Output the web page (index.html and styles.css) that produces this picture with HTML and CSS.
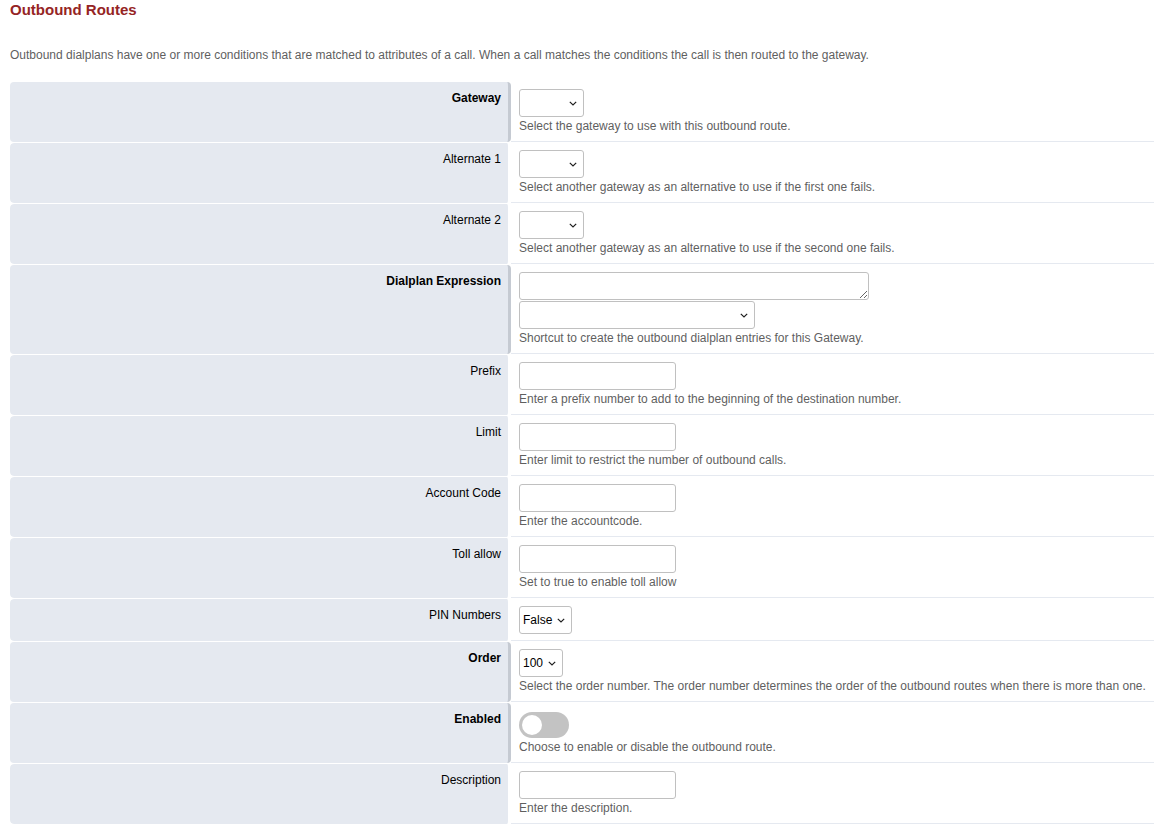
FILE: index.html
```html
<!DOCTYPE html>
<html lang="en">
<head>
    <meta charset="UTF-8">
    <meta name="viewport" content="width=device-width, initial-scale=1.0">
    <title>Outbound Routes</title>
    <link rel="stylesheet" href="styles.css">
</head>
<body>
    <div class="page">
        <h1 class="title">Outbound Routes</h1>
        <p class="intro">Outbound dialplans have one or more conditions that are matched to attributes of a call. When a call matches the conditions the call is then routed to the gateway.</p>

        <form class="form-rows" id="outbound_route">
            <div class="row">
                <div class="label req">Gateway</div>
                <div class="field">
                    <select class="fld sel sel-empty" name="gateway"><option value=""></option></select>
                    <div class="hint">Select the gateway to use with this outbound route.</div>
                </div>
            </div>

            <div class="row">
                <div class="label">Alternate 1</div>
                <div class="field">
                    <select class="fld sel sel-empty" name="gateway_2"><option value=""></option></select>
                    <div class="hint">Select another gateway as an alternative to use if the first one fails.</div>
                </div>
            </div>

            <div class="row">
                <div class="label">Alternate 2</div>
                <div class="field">
                    <select class="fld sel sel-empty" name="gateway_3"><option value=""></option></select>
                    <div class="hint">Select another gateway as an alternative to use if the second one fails.</div>
                </div>
            </div>

            <div class="row">
                <div class="label req">Dialplan Expression</div>
                <div class="field">
                    <textarea class="fld expr" name="dialplan_expression"></textarea>
                    <select class="fld sel sel-shortcut" name="dialplan_shortcut"><option value=""></option></select>
                    <div class="hint">Shortcut to create the outbound dialplan entries for this Gateway.</div>
                </div>
            </div>

            <div class="row">
                <div class="label">Prefix</div>
                <div class="field">
                    <input type="text" class="fld txt" name="prefix_number">
                    <div class="hint">Enter a prefix number to add to the beginning of the destination number.</div>
                </div>
            </div>

            <div class="row">
                <div class="label">Limit</div>
                <div class="field">
                    <input type="text" class="fld txt" name="limit">
                    <div class="hint">Enter limit to restrict the number of outbound calls.</div>
                </div>
            </div>

            <div class="row">
                <div class="label">Account Code</div>
                <div class="field">
                    <input type="text" class="fld txt" name="accountcode">
                    <div class="hint">Enter the accountcode.</div>
                </div>
            </div>

            <div class="row">
                <div class="label">Toll allow</div>
                <div class="field">
                    <input type="text" class="fld txt" name="toll_allow">
                    <div class="hint">Set to true to enable toll allow</div>
                </div>
            </div>

            <div class="row">
                <div class="label">PIN Numbers</div>
                <div class="field no-hint">
                    <select class="fld sel sel-pin" name="pin_numbers_enabled">
                        <option value="true">True</option>
                        <option value="false" selected>False</option>
                    </select>
                </div>
            </div>

            <div class="row">
                <div class="label req">Order</div>
                <div class="field">
                    <select class="fld sel sel-order" name="dialplan_order"><option>100</option></select>
                    <div class="hint">Select the order number. The order number determines the order of the outbound routes when there is more than one.</div>
                </div>
            </div>

            <div class="row">
                <div class="label req">Enabled</div>
                <div class="field">
                    <label class="switch">
                        <input type="checkbox" name="dialplan_enabled">
                        <span class="slider"></span>
                    </label>
                    <div class="hint">Choose to enable or disable the outbound route.</div>
                </div>
            </div>

            <div class="row">
                <div class="label">Description</div>
                <div class="field">
                    <input type="text" class="fld txt" name="dialplan_description">
                    <div class="hint">Enter the description.</div>
                </div>
            </div>
        </form>
    </div>
</body>
</html>
```

FILE: styles.css
```css
body {
    font-family: "Liberation Sans", Arial, sans-serif;
    font-size: 12px;
    color: #5f5f5f;
    background-color: #fff;
    margin: 0;
}
.page {
    padding: 1px 0 0 10px;
}
.title {
    margin: 0;
    font-size: 15px;
    line-height: 18px;
    font-weight: bold;
    color: #952424;
}
.intro {
    margin: 29px 0 19px 0;
    line-height: 15px;
    color: #5f5f5f;
}
.form-rows {
    display: flex;
    flex-direction: column;
    gap: 1px;
}
.row {
    display: flex;
}
.label {
    width: 491px;
    flex-shrink: 0;
    background-color: #e5e9f0;
    border-radius: 4px;
    padding: 9px 7px 6px 0;
    text-align: right;
    line-height: 15px;
    color: #000;
    border-right: 3px solid transparent;
    background-clip: padding-box;
}
.label.req {
    font-weight: bold;
    border-right-color: #c5cad2;
    background-clip: border-box;
}
.field {
    flex: 1;
    padding: 7px 0 7px 8px;
    border-bottom: 1px solid #e5e9f0;
}
.field.no-hint {
    padding-bottom: 6px;
}
.fld {
    display: block;
    box-sizing: border-box;
    font-family: "Liberation Sans", Arial, sans-serif;
    font-size: 12px;
    color: #000;
    background-color: #fff;
    border: 1px solid #c0c0c0;
    border-radius: 3px;
    margin: 0;
}
.sel {
    appearance: none;
    -webkit-appearance: none;
    height: 28px;
    padding: 0 18px 0 3px;
    background-image: url("data:image/svg+xml;utf8,<svg xmlns='http://www.w3.org/2000/svg' width='8' height='5' viewBox='0 0 8 5'><path d='M0.8 0.8 L4 4 L7.2 0.8' fill='none' stroke='%23222' stroke-width='1.2'/></svg>");
    background-repeat: no-repeat;
    background-position: right 6px center;
}
.sel-empty {
    width: 65px;
}
.sel-shortcut {
    width: 236px;
    margin-top: 1px;
}
.sel-pin {
    width: 53px;
}
.sel-order {
    width: 44px;
}
.expr {
    width: 350px;
    height: 28px;
    resize: both;
    padding: 4px 6px;
}
.txt {
    width: 157px;
    height: 28px;
    padding: 4px 6px;
}
.hint {
    margin-top: 2px;
    line-height: 15px;
    color: #5f5f5f;
}
.switch {
    position: relative;
    display: block;
    width: 50px;
    height: 26px;
    margin: 2px 0 0 0;
}
.switch input {
    opacity: 0;
    width: 0;
    height: 0;
    margin: 0;
}
.slider {
    position: absolute;
    inset: 0;
    background-color: #c3c3c3;
    border-radius: 13px;
    cursor: pointer;
}
.slider:before {
    content: "";
    position: absolute;
    left: 3px;
    top: 3px;
    width: 20px;
    height: 20px;
    border-radius: 50%;
    background-color: #fff;
}
```
